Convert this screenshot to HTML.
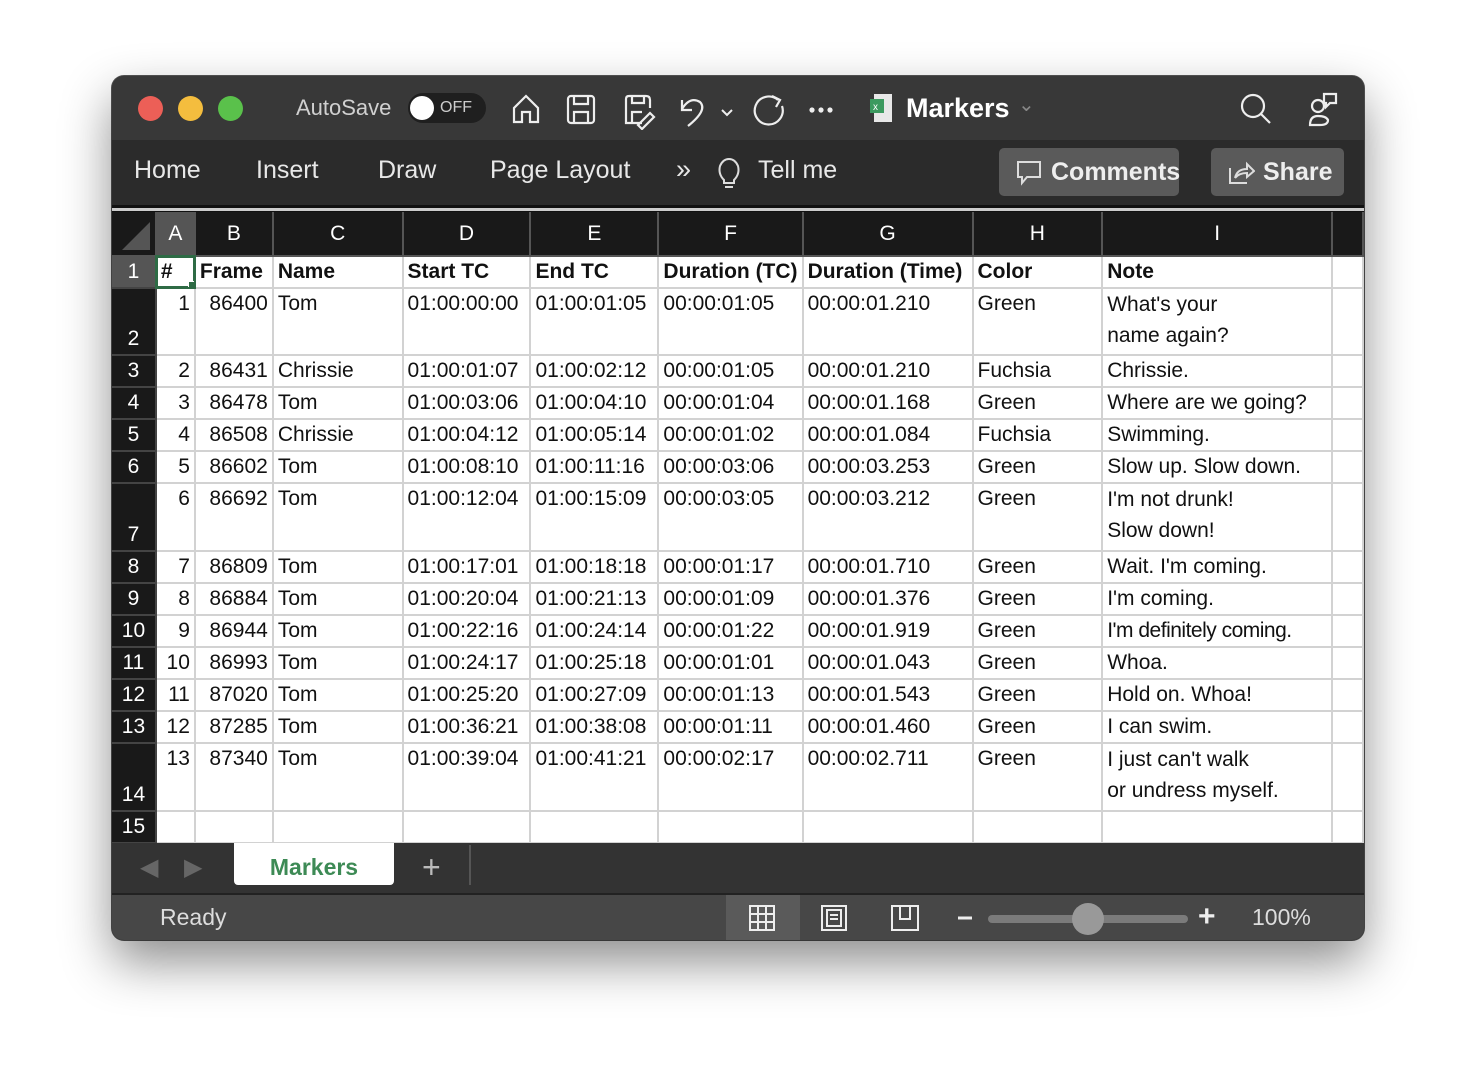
<!DOCTYPE html>
<html><head><meta charset="utf-8"><style>
*{margin:0;padding:0;box-sizing:border-box}
body{width:1476px;height:1088px;background:#fff;font-family:"Liberation Sans",sans-serif;position:relative;overflow:hidden}
.win{position:absolute;left:112px;top:76px;width:1252px;height:864px;border-radius:12px;overflow:hidden;background:#2c2c2c;box-shadow:0 22px 50px rgba(0,0,0,.45),0 0 0 1px #555}
.title{position:absolute;left:0;top:0;width:100%;height:64px;background:#383838}
.rib{position:absolute;left:0;top:64px;width:100%;height:65px;background:#2b2b2b}
.dot{position:absolute;top:20px;width:25px;height:25px;border-radius:50%}
.t{position:absolute;color:#e8e8e8;white-space:nowrap}
.sep{position:absolute;left:0;top:129px;width:100%;height:7px;background:#111;border-top:2px solid #111}
.sep i{position:absolute;left:0;top:1px;width:100%;height:3px;background:#ccc}
table{position:absolute;left:0;top:136px;border-collapse:collapse;table-layout:fixed;font-size:21px;color:#111}
td{border:2px solid #d2d2d2;background:#fff;vertical-align:top;line-height:30px;padding:0 4px;white-space:nowrap;overflow:hidden}
td.m{line-height:31px}
tr.h td{background:#191919;color:#fff;text-align:center;border:2px solid #555;border-top:none;vertical-align:middle;height:44px;line-height:42px}
td.r{background:#191919;color:#fff;text-align:center;vertical-align:bottom;border-color:#444;border-left:none;line-height:30px}
td.n{text-align:right}
tr.b td{font-weight:bold}
.tab{position:absolute;left:0;top:767px;width:100%;height:50px;background:#333}
.stat{position:absolute;left:0;top:817px;width:100%;height:47px;background:#474747;border-top:2px solid #222}
.btn{position:absolute;top:72px;height:48px;background:#5a5a5a;border-radius:5px;color:#eee;font-weight:bold;font-size:25px;line-height:48px}
</style></head><body>
<div class="win">
 <div class="title">
  <div class="dot" style="left:26px;background:#ec5f57"></div>
  <div class="dot" style="left:66px;background:#f4bd3e"></div>
  <div class="dot" style="left:106px;background:#5ac14b"></div>
  <div class="t" style="left:184px;top:19px;font-size:22px;color:#d0d0d0">AutoSave</div>
  <div style="position:absolute;left:296px;top:17px;width:78px;height:30px;border-radius:15px;background:#1f1f1f"></div>
  <div style="position:absolute;left:298px;top:20px;width:24px;height:24px;border-radius:50%;background:#fff"></div>
  <div class="t" style="left:328px;top:23px;font-size:16px;color:#ccc">OFF</div>
  <svg style="position:absolute;left:398px;top:14px" width="440" height="40" fill="none" stroke="#eee" stroke-width="2.2">
   <path d="M4 32V18L16 6 28 18V32H20V22H12V32Z"/>
   <rect x="58" y="6" width="26" height="27" rx="3"/><path d="M64 6V14H78V6M64 33V22H78V33"/>
   <path d="M132 33H116V9Q116 6 119 6H136Q140 6 140 10V18M122 6V13H134V6M122 33V22H132"/><path d="M128 35L140 23 144 27 132 39Z"/>
   <path d="M172 10V20H182M172 19Q180 6 190 12Q198 20 178 36"/>
   <path d="M212 20L217 25 222 20" stroke-width="2"/>
   <path d="M268 10A14 14 0 1 0 272 16M262 6L270 10 266 17"/>
   <circle cx="302" cy="20" r="1.5" fill="#eee"/><circle cx="311" cy="20" r="1.5" fill="#eee"/><circle cx="320" cy="20" r="1.5" fill="#eee"/>
  </svg>
  <svg style="position:absolute;left:756px;top:16px" width="30" height="32"><rect x="6" y="2" width="18" height="28" fill="#e8e8e8"/><rect x="2" y="7" width="14" height="14" fill="#3c9a5f"/><text x="5" y="18" font-size="10" fill="#fff" font-family="Liberation Sans">x</text></svg>
  <div class="t" style="left:794px;top:17px;font-size:27px;font-weight:bold;color:#fff">Markers</div>
  <div class="t" style="left:906px;top:16px;font-size:20px;color:#888">⌄</div>
  <svg style="position:absolute;left:1126px;top:14px" width="100" height="40" fill="none" stroke="#eee" stroke-width="2.2">
   <circle cx="15" cy="16" r="11"/><path d="M23 24L32 33"/>
   <circle cx="80" cy="16" r="6"/><path d="M72 35Q72 26 80 26Q88 26 90 30Q90 35 82 35Z"/><path d="M86 4H98V13H92L88 17V13H86Z"/>
  </svg>
 </div>
 <div class="rib">
  <div class="t" style="left:22px;top:16px;font-size:25px">Home</div>
  <div class="t" style="left:144px;top:16px;font-size:25px">Insert</div>
  <div class="t" style="left:266px;top:16px;font-size:25px">Draw</div>
  <div class="t" style="left:378px;top:16px;font-size:25px">Page Layout</div>
  <div class="t" style="left:564px;top:14px;font-size:27px">»</div>
  <svg style="position:absolute;left:604px;top:16px" width="26" height="36" fill="none" stroke="#ddd" stroke-width="2"><path d="M8 24Q2 18 4 10Q7 3 13 3Q19 3 22 10Q24 18 18 24V27H8Z"/><path d="M9 31H17"/></svg>
  <div class="t" style="left:646px;top:16px;font-size:25px">Tell me</div>
 </div>
 <div class="btn" style="left:887px;width:180px"><svg style="position:absolute;left:16px;top:11px" width="28" height="28" fill="none" stroke="#ddd" stroke-width="2"><path d="M3 3H25V18H12L7 24V18H3Z"/></svg><span style="position:absolute;left:52px">Comments</span></div>
 <div class="btn" style="left:1099px;width:133px"><svg style="position:absolute;left:16px;top:12px" width="28" height="26" fill="none" stroke="#ddd" stroke-width="2"><path d="M3 8V23H20M8 18Q10 9 20 9V4L27 11 20 17V13Q12 13 8 18"/></svg><span style="position:absolute;left:52px">Share</span></div>
 <div class="sep"><i></i></div>
 <table>
  <colgroup><col style="width:44px"><col style="width:39px"><col style="width:78px"><col style="width:130px"><col style="width:128px"><col style="width:128px"><col style="width:144px"><col style="width:170px"><col style="width:130px"><col style="width:230px"><col style="width:31px"></colgroup>
  <tr class="h"><td style="position:relative;border-left:none"><svg style="position:absolute;left:8px;top:8px" width="32" height="32"><path d="M30 2V30H2Z" fill="#555"/></svg></td><td style="background:#555">A</td><td>B</td><td>C</td><td>D</td><td>E</td><td>F</td><td>G</td><td>H</td><td>I</td><td></td></tr>
  <tr class="b" style="height:32px"><td class="r" style="background:#555;font-weight:normal">1</td><td style="outline:3px solid #2e6b45;outline-offset:-2px;position:relative">#<div style="position:absolute;right:-3px;bottom:-3px;width:9px;height:9px;background:#2e6b45;border:1px solid #fff"></div></td><td>Frame</td><td>Name</td><td>Start TC</td><td>End TC</td><td>Duration (TC)</td><td>Duration (Time)</td><td>Color</td><td>Note</td><td></td></tr>
  <tr style="height:67px"><td class="r">2</td><td class="n">1</td><td class="n">86400</td><td>Tom</td><td>01:00:00:00</td><td>01:00:01:05</td><td>00:00:01:05</td><td>00:00:01.210</td><td>Green</td><td class="m">What's your<br>name again?</td><td></td></tr>
  <tr style="height:32px"><td class="r">3</td><td class="n">2</td><td class="n">86431</td><td>Chrissie</td><td>01:00:01:07</td><td>01:00:02:12</td><td>00:00:01:05</td><td>00:00:01.210</td><td>Fuchsia</td><td>Chrissie.</td><td></td></tr>
  <tr style="height:32px"><td class="r">4</td><td class="n">3</td><td class="n">86478</td><td>Tom</td><td>01:00:03:06</td><td>01:00:04:10</td><td>00:00:01:04</td><td>00:00:01.168</td><td>Green</td><td>Where are we going?</td><td></td></tr>
  <tr style="height:32px"><td class="r">5</td><td class="n">4</td><td class="n">86508</td><td>Chrissie</td><td>01:00:04:12</td><td>01:00:05:14</td><td>00:00:01:02</td><td>00:00:01.084</td><td>Fuchsia</td><td>Swimming.</td><td></td></tr>
  <tr style="height:32px"><td class="r">6</td><td class="n">5</td><td class="n">86602</td><td>Tom</td><td>01:00:08:10</td><td>01:00:11:16</td><td>00:00:03:06</td><td>00:00:03.253</td><td>Green</td><td>Slow up. Slow down.</td><td></td></tr>
  <tr style="height:68px"><td class="r">7</td><td class="n">6</td><td class="n">86692</td><td>Tom</td><td>01:00:12:04</td><td>01:00:15:09</td><td>00:00:03:05</td><td>00:00:03.212</td><td>Green</td><td class="m">I'm not drunk!<br>Slow down!</td><td></td></tr>
  <tr style="height:32px"><td class="r">8</td><td class="n">7</td><td class="n">86809</td><td>Tom</td><td>01:00:17:01</td><td>01:00:18:18</td><td>00:00:01:17</td><td>00:00:01.710</td><td>Green</td><td>Wait. I'm coming.</td><td></td></tr>
  <tr style="height:32px"><td class="r">9</td><td class="n">8</td><td class="n">86884</td><td>Tom</td><td>01:00:20:04</td><td>01:00:21:13</td><td>00:00:01:09</td><td>00:00:01.376</td><td>Green</td><td>I'm coming.</td><td></td></tr>
  <tr style="height:32px"><td class="r">10</td><td class="n">9</td><td class="n">86944</td><td>Tom</td><td>01:00:22:16</td><td>01:00:24:14</td><td>00:00:01:22</td><td>00:00:01.919</td><td>Green</td><td style="letter-spacing:-.5px">I'm definitely coming.</td><td></td></tr>
  <tr style="height:32px"><td class="r">11</td><td class="n">10</td><td class="n">86993</td><td>Tom</td><td>01:00:24:17</td><td>01:00:25:18</td><td>00:00:01:01</td><td>00:00:01.043</td><td>Green</td><td>Whoa.</td><td></td></tr>
  <tr style="height:32px"><td class="r">12</td><td class="n">11</td><td class="n">87020</td><td>Tom</td><td>01:00:25:20</td><td>01:00:27:09</td><td>00:00:01:13</td><td>00:00:01.543</td><td>Green</td><td>Hold on. Whoa!</td><td></td></tr>
  <tr style="height:32px"><td class="r">13</td><td class="n">12</td><td class="n">87285</td><td>Tom</td><td>01:00:36:21</td><td>01:00:38:08</td><td>00:00:01:11</td><td>00:00:01.460</td><td>Green</td><td>I can swim.</td><td></td></tr>
  <tr style="height:68px"><td class="r">14</td><td class="n">13</td><td class="n">87340</td><td>Tom</td><td>01:00:39:04</td><td>01:00:41:21</td><td>00:00:02:17</td><td>00:00:02.711</td><td>Green</td><td class="m">I just can't walk<br>or undress myself.</td><td></td></tr>
  <tr style="height:32px"><td class="r">15</td><td></td><td></td><td></td><td></td><td></td><td></td><td></td><td></td><td></td><td></td></tr>
 </table>
 <div class="tab">
  <div class="t" style="left:28px;top:10px;font-size:24px;color:#666">◀</div>
  <div class="t" style="left:72px;top:10px;font-size:24px;color:#666">▶</div>
  <div style="position:absolute;left:122px;top:0;width:160px;height:42px;background:#fff;border-radius:0 0 4px 4px;color:#3d8a55;font-weight:bold;font-size:23px;text-align:center;line-height:48px">Markers</div>
  <div class="t" style="left:310px;top:6px;font-size:32px;color:#bbb">+</div>
  <div style="position:absolute;left:357px;top:2px;width:2px;height:40px;background:#555"></div>
 </div>
 <div class="stat">
  <div class="t" style="left:48px;top:9px;font-size:23px;color:#ddd">Ready</div>
  <div style="position:absolute;left:614px;top:0;width:74px;height:45px;background:#5a5a5a"></div>
  <svg style="position:absolute;left:630px;top:8px" width="420" height="30" fill="none" stroke="#eee" stroke-width="2">
   <rect x="8" y="3" width="24" height="24"/><path d="M16 3V27M24 3V27M8 11H32M8 19H32"/>
   <rect x="80" y="3" width="24" height="24"/><rect x="85" y="7" width="14" height="16"/><path d="M88 12H96M88 16H96"/>
   <rect x="150" y="3" width="26" height="24"/><path d="M158 3V16H168V3"/>
   <path d="M216 15H230" stroke-width="3"/>
  </svg>
  <div style="position:absolute;left:876px;top:20px;width:200px;height:8px;border-radius:4px;background:#7b7b7b"></div>
  <div style="position:absolute;left:960px;top:8px;width:32px;height:32px;border-radius:50%;background:#999"></div>
  <div class="t" style="left:1086px;top:5px;font-size:30px;font-weight:bold;color:#eee">+</div>
  <div class="t" style="left:1140px;top:9px;font-size:23px;color:#ddd">100%</div>
 </div>
</div>
</body></html>
